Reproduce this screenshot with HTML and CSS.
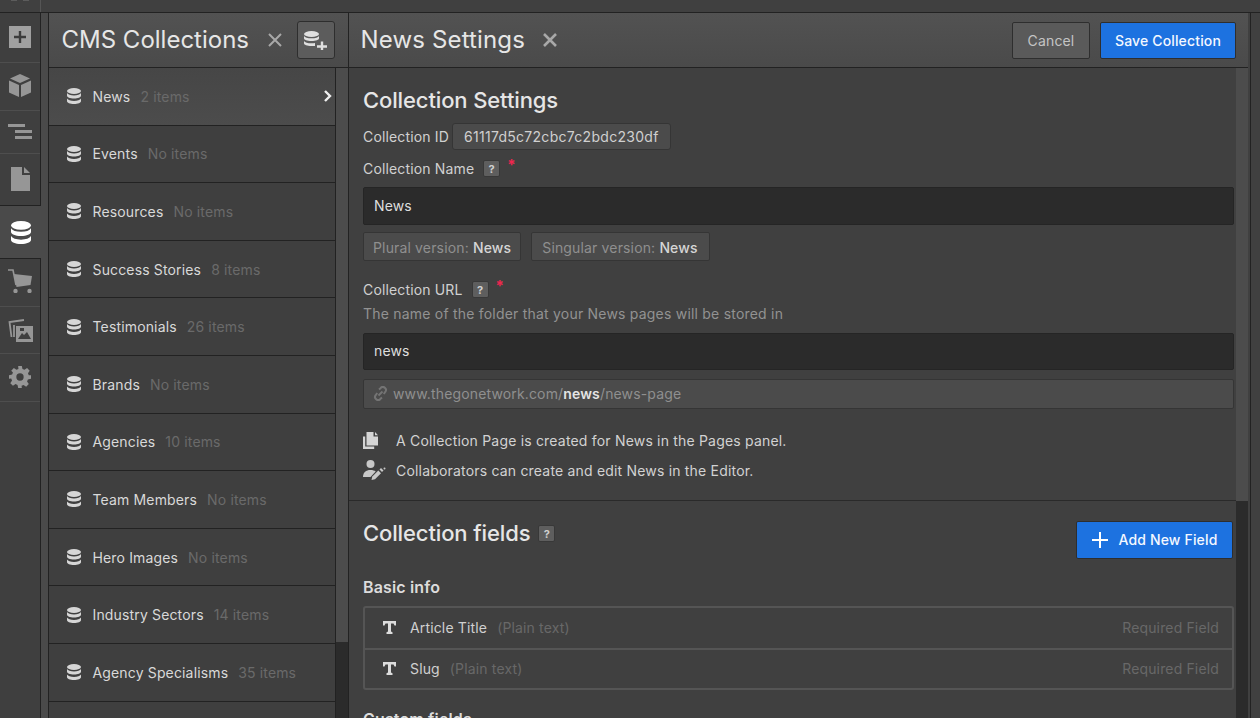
FILE: index.html
```html
<!DOCTYPE html>
<html lang="en">
<head>
<meta charset="utf-8">
<title>CMS Collections</title>
<link rel="stylesheet" href="styles.css">
</head>
<body>
<svg class="defs" width="0" height="0" aria-hidden="true">
  <defs>
    <symbol id="db" viewBox="0 0 14 16">
      <ellipse cx="7" cy="3" rx="7" ry="3"/>
      <path d="M0 5c1 1.600 3.500 2.500 7 2.500S13 6.600 14 5v2.500C14 9.300 11 10.500 7 10.500S0 9.300 0 7.500z"/>
      <path d="M0 10.500c1 1.600 3.500 2.500 7 2.500s6-.9 7-2.500V13c0 1.800-3 3-7 3s-7-1.200-7-3z"/>
    </symbol>
  </defs>
</svg>
<div class="app">
  <div class="topbar"><div class="topbar-left"><span class="stub"></span><span class="stub"></span></div></div>
  <div class="workspace">
    <nav class="rail">
      <div class="rail-item h50 lift1"><svg width="22" height="22" viewBox="0 0 22 22"><path fill="#a0a0a0" d="M0 0h22v22H0z"/><path fill="#3c3c3c" d="M9.800 5h2.400v4.800H17v2.400h-4.800V17H9.800v-4.800H5V9.800h4.800z"/></svg></div>
      <div class="rail-item h48 lift2"><svg width="22" height="24" viewBox="0 0 22 24"><path fill="#969696" d="M11 0l10 4.500L11 9 1 4.500z"/><path fill="#969696" d="M0 6.500l10 4.500v12l-10-4.500z"/><path fill="#969696" d="M22 6.500L12 11v12l10-4.500z"/></svg></div>
      <div class="rail-item h43"><svg width="24" height="16" viewBox="0 0 24 16"><path fill="#969696" d="M0 0h17v3H0zM7 6h17v3H7zM7 12h17v3H7z"/></svg></div>
      <div class="rail-item h52 lift2"><svg width="19" height="24" viewBox="0 0 19 24"><path fill="#969696" d="M0 0h11v8h8v16H0z"/><path fill="#969696" d="M13 0l6 6h-6z"/></svg></div>
      <div class="rail-item rail-active"><svg class="rail-db" width="20" height="23"><use href="#db"/></svg></div>
      <div class="rail-item h48 lift3"><svg width="24" height="24" viewBox="0 0 24 24"><path fill="none" stroke="#969696" stroke-width="1.600" d="M0 1h5l3 15"/><path fill="#969696" d="M6 5l18 2-1.500 9L8.500 18z"/><circle cx="7.500" cy="22" r="2.200" fill="#969696"/><circle cx="21.500" cy="22" r="2.200" fill="#969696"/></svg></div>
      <div class="rail-item h47"><svg width="25" height="23" viewBox="0 0 25 23"><path fill="none" stroke="#969696" stroke-width="1.800" d="M16 1L1.500 3l2 15"/><path fill="none" stroke="#969696" stroke-width="1.800" d="M6 18V6"/><path fill="#969696" fill-rule="evenodd" d="M8 7h17v16H8zM10 20h13l-4-7-3 3-2-2zM12 9h4v3h-4z"/></svg></div>
      <div class="rail-item h48 lift2"><svg width="22" height="22" viewBox="0 0 24 24"><path fill="#969696" fill-rule="evenodd" d="M10 0h4l.7 3.300 2.200.9L19.700 2.300l2.900 2.900-1.900 2.800.9 2.200L24 10.000v4l-3.400.7-.9 2.200 1.900 2.800-2.900 2.900-2.800-1.900-2.200.9L14 24h-4l-.7-3.400-2.200-.9-2.800 1.900-2.900-2.900 1.900-2.800-.9-2.200L0 14v-4l3.400-.8.9-2.200L2.400 5.200l2.900-2.900 2.800 1.900 2.200-.9zM12 8a4 4 0 100 8 4 4 0 000-8z"/></svg></div>
    </nav>
    <div class="rail-gap"></div>

    <section class="panel">
      <header class="panel-head">
        <h1 class="title title-cms">CMS Collections</h1>
        <svg class="close" width="14" height="14" viewBox="0 0 14 14"><path stroke="#a8a8a8" stroke-width="2" d="M1 1l12 12M13 1L1 13"/></svg>
        <button class="add-coll" aria-label="Add collection"><svg width="24" height="20" viewBox="0 0 24 20"><g fill="#e0e0e0"><ellipse cx="7.500" cy="4" rx="7.500" ry="3"/><path d="M0 6c1 1.500 3.500 2.300 7.500 2.300S14 7.500 15 6v2.300C15 10 12 11 7.500 11S0 10 0 8.300z"/><path d="M0 11c1 1.500 3.500 2.300 7.500 2.300 1.500 0 2.500-.1 3.500-.4V16H7.500C3 16 0 15 0 13.300z"/><path d="M16.800 11.500h2.400v3.800H23v2.400h-3.800v3.300h-2.400v-3.300H13v-2.400h3.800z"/></g></svg></button>
      </header>
      <div class="panel-body">
        <ul class="coll-list">
          <li class="coll selected"><svg class="db" width="14" height="16"><use href="#db"/></svg><span class="coll-name">News</span><span class="coll-count">2 items</span><svg class="chev" width="9" height="12" viewBox="0 0 9 12"><path fill="none" stroke="#f0f0f0" stroke-width="2.400" d="M2 1l5 5-5 5"/></svg></li>
          <li class="coll"><svg class="db" width="14" height="16"><use href="#db"/></svg><span class="coll-name">Events</span><span class="coll-count">No items</span></li>
          <li class="coll"><svg class="db" width="14" height="16"><use href="#db"/></svg><span class="coll-name">Resources</span><span class="coll-count">No items</span></li>
          <li class="coll"><svg class="db" width="14" height="16"><use href="#db"/></svg><span class="coll-name">Success Stories</span><span class="coll-count">8 items</span></li>
          <li class="coll"><svg class="db" width="14" height="16"><use href="#db"/></svg><span class="coll-name">Testimonials</span><span class="coll-count">26 items</span></li>
          <li class="coll"><svg class="db" width="14" height="16"><use href="#db"/></svg><span class="coll-name">Brands</span><span class="coll-count">No items</span></li>
          <li class="coll"><svg class="db" width="14" height="16"><use href="#db"/></svg><span class="coll-name">Agencies</span><span class="coll-count">10 items</span></li>
          <li class="coll"><svg class="db" width="14" height="16"><use href="#db"/></svg><span class="coll-name">Team Members</span><span class="coll-count">No items</span></li>
          <li class="coll"><svg class="db" width="14" height="16"><use href="#db"/></svg><span class="coll-name">Hero Images</span><span class="coll-count">No items</span></li>
          <li class="coll"><svg class="db" width="14" height="16"><use href="#db"/></svg><span class="coll-name">Industry Sectors</span><span class="coll-count">14 items</span></li>
          <li class="coll"><svg class="db" width="14" height="16"><use href="#db"/></svg><span class="coll-name">Agency Specialisms</span><span class="coll-count">35 items</span></li>
        </ul>
        <div class="scroll scroll-list"><div class="thumb"></div></div>
      </div>
    </section>

    <section class="main">
      <header class="main-head">
        <h1 class="title title-main">News Settings</h1>
        <svg class="close close-main" width="14" height="14" viewBox="0 0 14 14"><path stroke="#a8a8a8" stroke-width="2.600" d="M1 1l12 12M13 1L1 13"/></svg>
        <div class="head-actions">
          <button class="btn btn-cancel">Cancel</button>
          <button class="btn btn-blue btn-save">Save Collection</button>
        </div>
      </header>
      <div class="main-body">
        <div class="content">
          <div class="settings">
            <h2 class="section-title">Collection Settings</h2>
            <div class="id-row"><span class="label">Collection ID</span><span class="id-chip">61117d5c72cbc7c2bdc230df</span></div>
            <div class="label-row"><span class="label">Collection Name</span><span class="help">?</span><span class="req">*</span></div>
            <div class="input">News</div>
            <div class="chips">
              <span class="chip">Plural version: <b>News</b></span>
              <span class="chip">Singular version: <b>News</b></span>
            </div>
            <div class="label-row url-label"><span class="label">Collection URL</span><span class="help">?</span><span class="req">*</span></div>
            <p class="hint">The name of the folder that your News pages will be stored in</p>
            <div class="input input-url">news</div>
            <div class="url-preview">
              <svg width="15" height="15" viewBox="0 0 15 15"><g fill="none" stroke="#747474" stroke-width="2"><path d="M6 3.500l1.500-1.300a3 3 0 014.800 3.600L10.800 8"/><path d="M9 11.500l-1.500 1.300a3 3 0 01-4.800-3.600L4.200 7"/><path d="M5.500 9.500l4-4"/></g></svg>
              <span>www.thegonetwork.com/<b>news</b>/news-page</span>
            </div>
            <div class="note">
              <svg class="note-icon" width="23" height="17" viewBox="0 0 23 17"><g fill="#d4d4d4"><path d="M3.500 0h7v4.500H15V13.500H3.500z"/><path d="M12 0l3 3.200h-3z"/><path d="M0 4.500h2.200v10h9V17H0z"/></g></svg>
              <span>A Collection Page is created for News in the Pages panel.</span>
            </div>
            <div class="note">
              <svg class="note-icon" width="23" height="20" viewBox="0 0 23 20"><g fill="#c8c8c8"><circle cx="7.500" cy="4" r="4"/><path d="M0 17c0-4.500 3-7 7.500-7 2.200 0 3.900.5 5.200 1.500L7.500 17z"/><path d="M8.500 20l.8-3.500 6-6 2.700 2.700-6 6z"/><path d="M16.500 9.500l1.500-1.500 2.500 2.500-1.500 1.500z"/><circle cx="21.500" cy="8.500" r="1"/></g></svg>
              <span>Collaborators can create and edit News in the Editor.</span>
            </div>
          </div>
          <div class="fields">
            <div class="fields-head">
              <h2 class="section-title">Collection fields</h2>
              <span class="help help-title">?</span>
              <button class="btn btn-blue btn-add"><svg width="16" height="16" viewBox="0 0 16 16"><path fill="#fff" d="M7 0h2v7h7v2H9v7H7V9H0V7h7z"/></svg>Add New Field</button>
            </div>
            <h3 class="sub-title">Basic info</h3>
            <ul class="field-list">
              <li class="field"><svg class="t" width="13" height="13" viewBox="0 0 13 13"><path fill="#dcdcdc" d="M0 0h13v4.500h-1.500L10.500 2.500H8V10.500l1.500.8V13H3.500v-1.700l1.500-.8V2.500H2.500L1.500 4.500H0z"/></svg><span class="field-name">Article Title</span><span class="field-type">(Plain text)</span><span class="field-req">Required Field</span></li>
              <li class="field"><svg class="t" width="13" height="13" viewBox="0 0 13 13"><path fill="#dcdcdc" d="M0 0h13v4.500h-1.500L10.500 2.500H8V10.500l1.500.8V13H3.500v-1.700l1.500-.8V2.500H2.500L1.500 4.500H0z"/></svg><span class="field-name">Slug</span><span class="field-type">(Plain text)</span><span class="field-req">Required Field</span></li>
            </ul>
            <h3 class="sub-title custom">Custom fields</h3>
          </div>
        </div>
        <div class="scroll scroll-main"><div class="thumb"></div></div>
      </div>
    </section>
    <div class="edge"></div>
  </div>
</div>
</body>
</html>
```
FILE: styles.css
```css
* { box-sizing: border-box; }
html, body { margin: 0; height: 100%; overflow: hidden; }
body { background: #404040; font-family: Inter, "Liberation Sans", sans-serif; color: #d9d9d9; font-size: 14px; letter-spacing: 0.15px; }
.defs { display: block; height: 0; }
h1, h2, h3, p, ul { margin: 0; padding: 0; }
ul { list-style: none; }
button { font-family: inherit; letter-spacing: inherit; cursor: default; }

.app { display: flex; flex-direction: column; height: 718px; }
.topbar { height: 13px; flex: none; background: #404040; border-bottom: 1px solid #222; }
.topbar-left { width: 41px; height: 12px; border-right: 1px solid #555; display: flex; justify-content: center; gap: 6px; }
.stub { width: 6px; height: 1px; background: #5c5c5c; }
.workspace { display: flex; flex: 1; min-height: 0; }

.rail { width: 41px; flex: none; background: #3f3f3f; border-right: 1px solid #222; }
.rail-item { display: flex; align-items: center; justify-content: center; border-bottom: 1px solid #4e4e4e; height: 48px; }
.h50 { height: 50px; }
.h48 { height: 48px; }
.h47 { height: 47px; }
.h43 { height: 43px; }
.h52 { height: 52px; border-bottom-color: #222; }
.lift1 { padding-bottom: 1px; }
.lift2 { padding-bottom: 2px; }
.lift3 { padding-bottom: 4px; }
.rail-active { height: 53px; width: 41px; margin-right: -1px; background: #4a4a4a; border-bottom: 1px solid #222; }
.rail-db { fill: #fff; }
.rail-gap { width: 7px; flex: none; background: #4a4a4a; }

.panel { width: 300px; flex: none; display: flex; flex-direction: column; border-left: 1px solid #222; }
.panel-head { height: 55px; flex: none; display: flex; align-items: center; padding: 0 13px 0 12.500px; background: linear-gradient(#525252, #4a4a4a); border-bottom: 1px solid #222; }
.title { font-size: 24px; font-weight: 400; color: #e6e6e6; line-height: 30px; white-space: nowrap; }
.title-cms { letter-spacing: 0; }
.title-main { letter-spacing: 0.15px; }
.close { margin-left: 19px; flex: none; }
.add-coll { margin-left: auto; width: 38px; height: 38px; padding: 0; display: flex; align-items: center; justify-content: center; background: #5c5c5c; border: 1px solid #2e2e2e; border-radius: 3px; }
.panel-body { flex: 1; min-height: 0; display: flex; overflow: hidden; }
.coll-list { flex: 1; min-width: 0; background: #3f3f3f; border-right: 1px solid #222; }
.coll { height: 57.600px; display: flex; align-items: center; padding: 0 0 0 18px; border-bottom: 1px solid #222; white-space: nowrap; }
.coll.selected { background: linear-gradient(#464646, #4c4c4c); }
.db { fill: #d6d6d6; flex: none; }
.coll-name { margin-left: 11.500px; font-size: 14px; color: #d9d9d9; }
.coll-count { margin-left: 10px; font-size: 14px; color: #6a6a6a; }
.chev { margin-left: auto; margin-right: 3px; }
.scroll { width: 12px; flex: none; background: #2b2b2b; }
.thumb { background: #4c4c4c; }
.scroll-list .thumb { height: 574px; }

.main { flex: 1; min-width: 0; display: flex; flex-direction: column; border-left: 1px solid #222; }
.main-head { height: 55px; flex: none; display: flex; align-items: center; padding: 0 12px 0 11.500px; background: linear-gradient(#525252, #4a4a4a); border-bottom: 1px solid #222; }
.close-main { margin-left: 18px; }
.head-actions { margin-left: auto; display: flex; gap: 10px; }
.btn { height: 37px; border-radius: 2px; border: 1px solid #2e2e2e; font-size: 14px; font-weight: 500; padding: 0; }
.btn-cancel { width: 78px; background: #5a5a5a; color: #c4c4c4; font-weight: 400; }
.btn-blue { background: #1d72e0; color: #f4f8ff; }
.btn-save { width: 136px; }
.main-body { flex: 1; min-height: 0; display: flex; overflow: hidden; }
.content { flex: 1; min-width: 0; background: #404040; overflow: hidden; }
.scroll-main .thumb { height: 433px; }

.settings { padding: 18px 2px 0 14px; height: 433px; border-bottom: 1px solid #2a2a2a; }
.section-title { font-size: 22px; font-weight: 500; line-height: 28px; color: #e6e6e6; letter-spacing: -0.12px; }
.id-row { display: flex; align-items: center; margin-top: 9px; }
.label { font-size: 14px; color: #d0d0d0; line-height: 18px; }
.id-chip { margin-left: 3px; height: 27px; display: flex; align-items: center; padding: 0 11px; background: #4b4b4b; border: 1px solid #353535; border-radius: 3px; color: #d0d0d0; letter-spacing: 0.29px; }
.label-row { display: flex; align-items: center; margin-top: 5px; height: 27px; }
.help { width: 17px; height: 17px; margin-left: 9px; display: flex; align-items: center; justify-content: center; background: #5e5e5e; border: 1px solid #383838; border-radius: 2px; font-size: 11px; font-weight: 700; color: #d0d0d0; }
.req { margin-left: 7px; margin-top: -7px; color: #f0264f; font-size: 15px; line-height: 14px; font-weight: 700; }
.input { height: 38px; margin-top: 5px; padding: 0 0 2px 10px; display: flex; align-items: center; background: #2b2b2b; border: 1px solid #252525; border-radius: 2px; color: #dedede; }
.chips { display: flex; gap: 10px; margin-top: 7px; }
.chip { height: 29px; display: flex; align-items: center; padding: 1px 9px 0; background: #4b4b4b; border: 1px solid #353535; border-radius: 2px; color: #8f8f8f; white-space: pre; }
.chip + .chip { padding: 1px 11px 0 10px; }
.chip b { font-weight: 500; color: #d6d6d6; }
.url-label { margin-top: 15px; }
.hint { margin-top: 1px; line-height: 19px; color: #929292; letter-spacing: 0.21px; }
.input-url { height: 37px; margin-top: 10px; }
.url-preview { height: 30px; margin-top: 9px; padding: 0 0 1px 9px; display: flex; align-items: center; gap: 5px; background: #4b4b4b; border: 1px solid #353535; border-radius: 2px; color: #8f8f8f; }
.url-preview b { font-weight: 600; color: #e4e4e4; }
.note { height: 30px; display: flex; align-items: center; color: #d2d2d2; letter-spacing: 0.19px; }
.note-icon { flex: none; margin-right: 10px; }
.url-preview + .note { margin-top: 16px; }

.fields { padding: 0 2px 0 14px; }
.fields-head { display: flex; align-items: center; height: 61px; padding-top: 3px; }
.help-title { margin-left: 8px; margin-top: 1px; }
.btn-add { margin-left: auto; margin-right: 1px; margin-top: 13px; width: 157px; height: 38px; display: flex; align-items: center; justify-content: center; gap: 11px; }
.sub-title { font-size: 16px; font-weight: 600; line-height: 20px; color: #dcdcdc; margin-top: 15px; }
.field-list { margin-top: 9px; border: 2px solid #555; border-radius: 3px; }
.field { height: 40px; display: flex; align-items: center; padding: 0 13px 2px 18px; }
.field + .field { border-top: 2px solid #555; }
.t { flex: none; }
.field-name { margin-left: 14px; color: #d0d0d0; }
.field-type { margin-left: 10px; color: #686868; }
.field-req { margin-left: auto; color: #686868; }
.custom { margin-top: 19px; }
.edge { width: 12px; flex: none; background: linear-gradient(to right, #404040 2px, #222 2px, #222 3px, #404040 3px); }
```
